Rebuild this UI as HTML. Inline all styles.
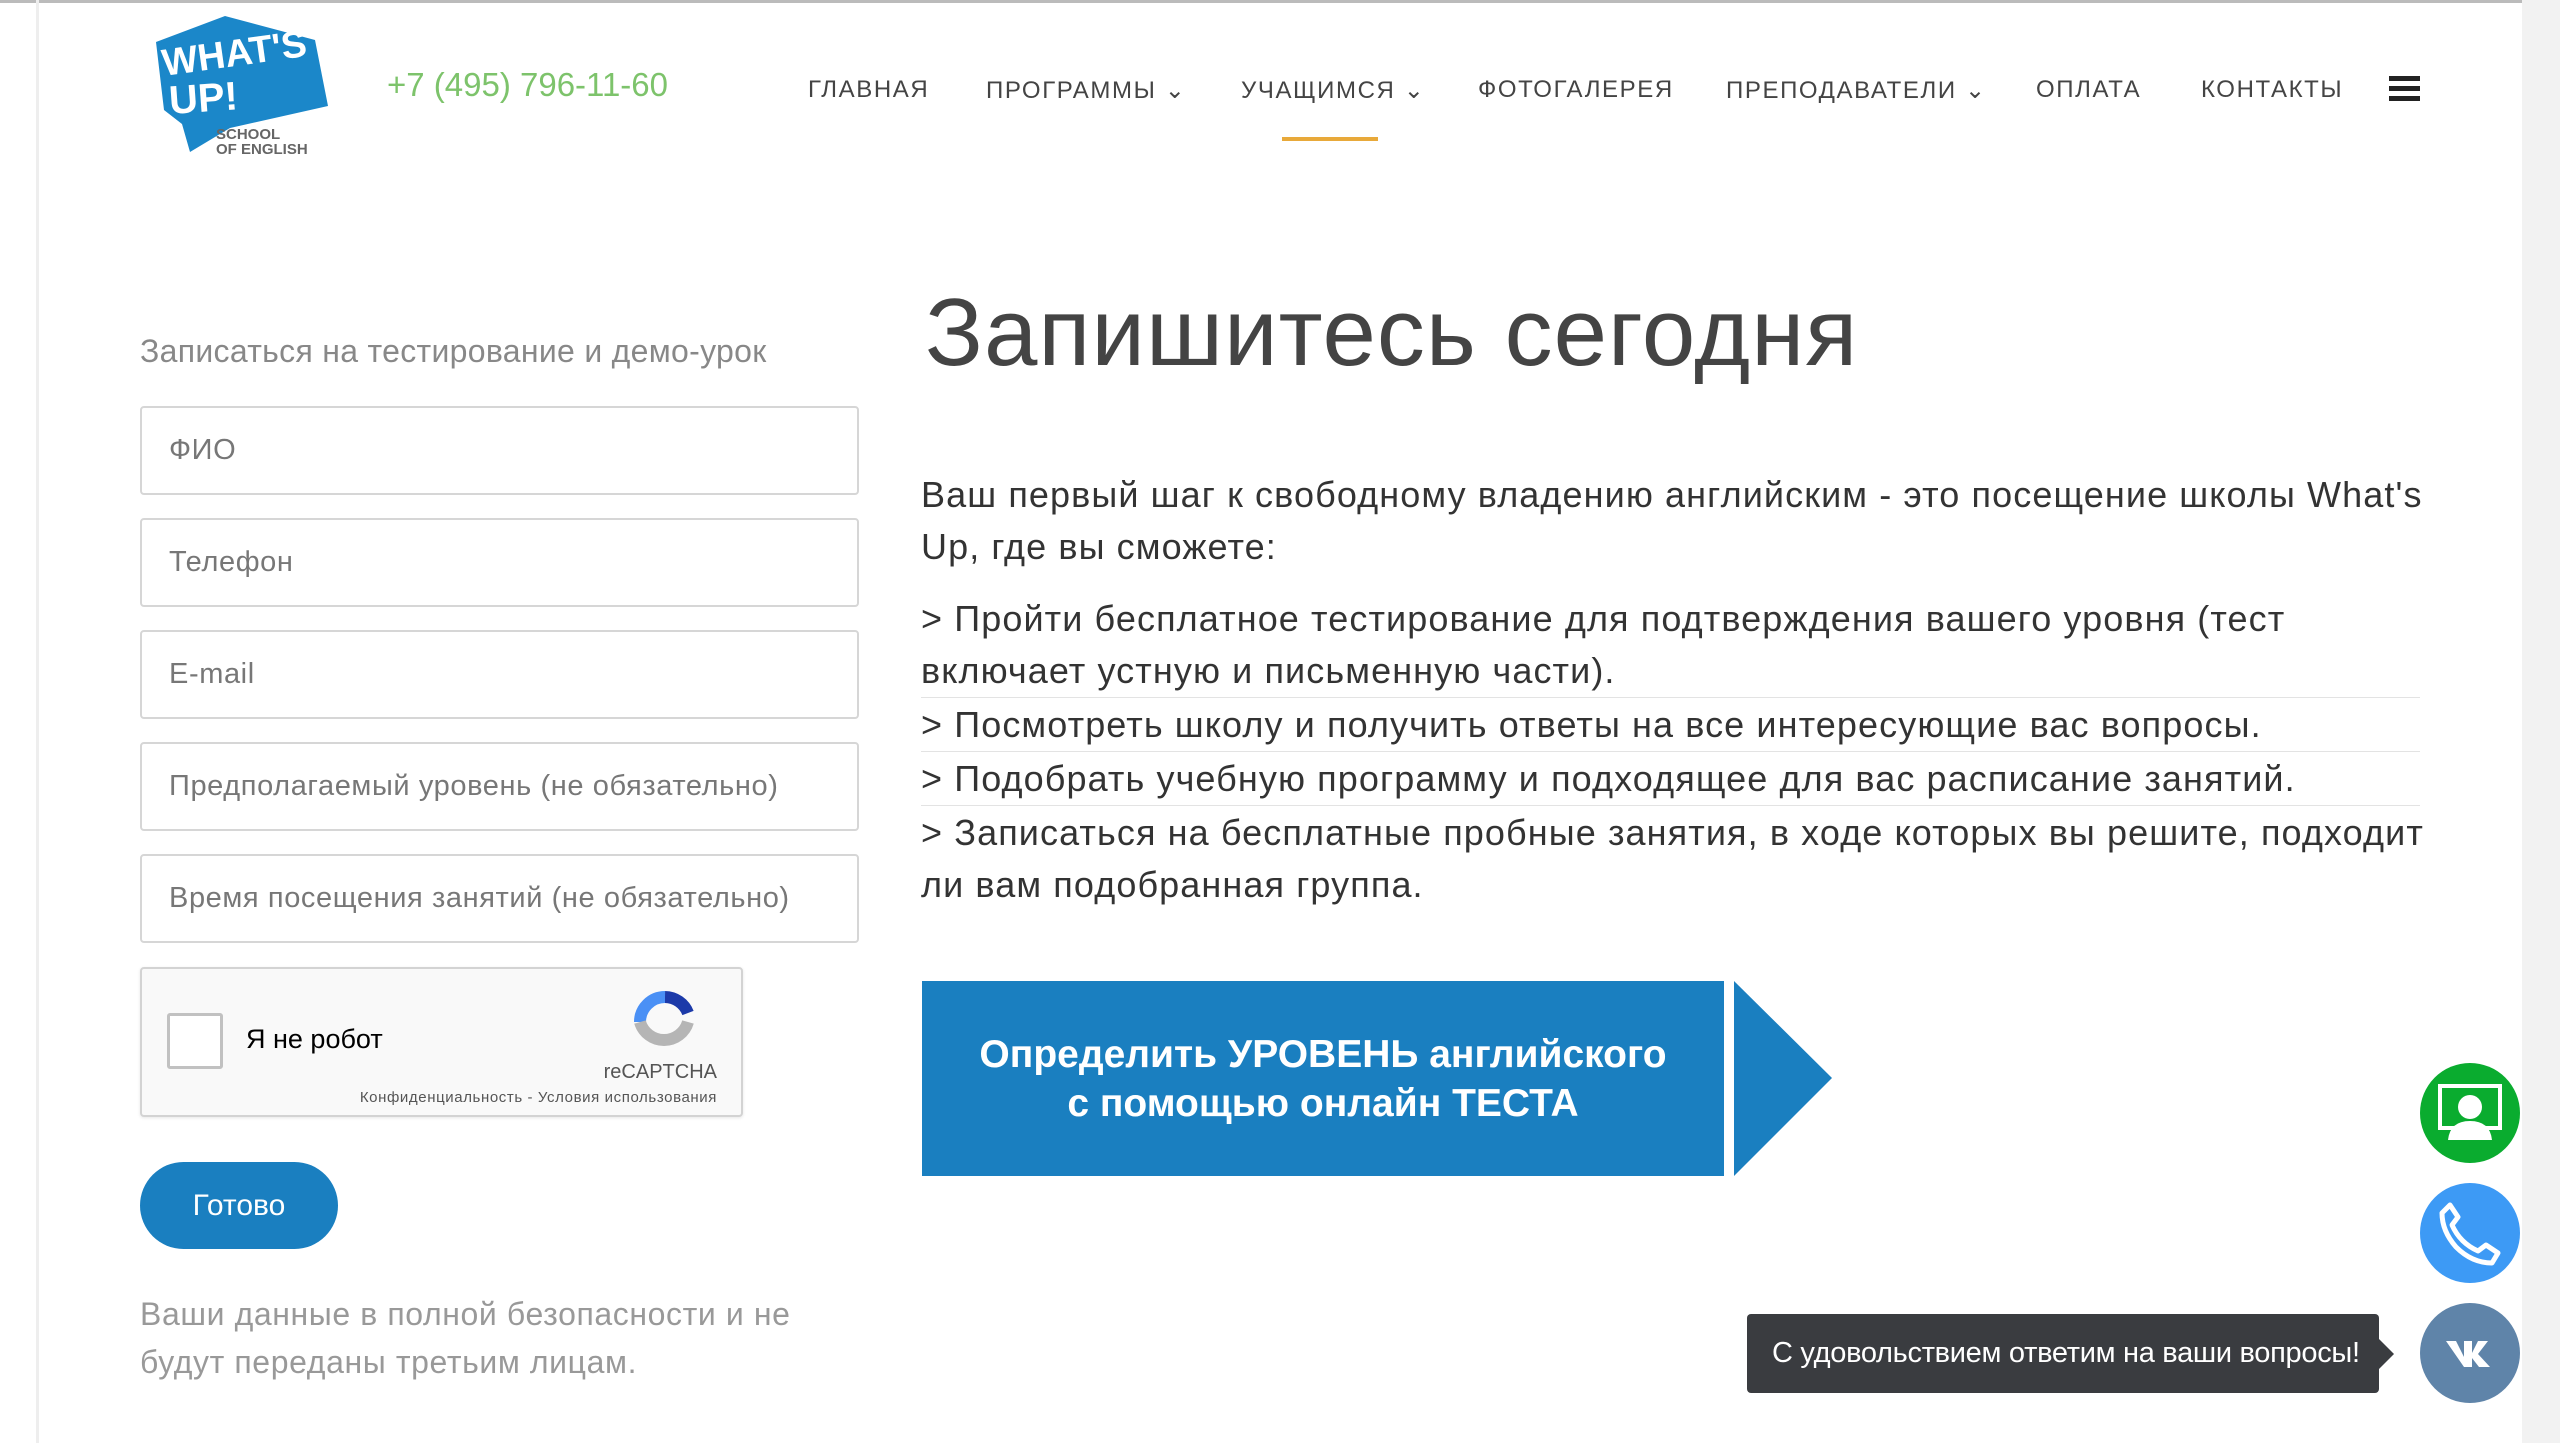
<!DOCTYPE html>
<html><head><meta charset="utf-8"><style>
*{margin:0;padding:0;box-sizing:border-box}
body{width:2560px;height:1443px;background:#fff;position:relative;overflow:hidden;font-family:"Liberation Sans","DejaVu Sans",sans-serif}
.a{position:absolute}
.nav{top:76px;font-size:24px;letter-spacing:1.6px;color:#444;white-space:nowrap}
.inp{left:140px;width:719px;height:89px;border:2px solid #d6d6d6;border-radius:4px;font-size:29px;color:#777;padding-left:27px;line-height:85px;letter-spacing:0.6px}
.li{left:921px;font-size:36px;color:#333;line-height:52px;width:1512px;letter-spacing:1.1px}
.sep{left:921px;width:1499px;height:1px;background:#e3e3e3}
</style></head><body>
<div class="a" style="left:0;top:0;width:2560px;height:3px;background:#bbb"></div>
<div class="a" style="left:36px;top:0;width:3px;height:1443px;background:#eee"></div>
<div class="a" style="left:2522px;top:0;width:38px;height:1443px;background:#f2f2f2"></div>
<svg class="a" style="left:150px;top:14px" width="180" height="145" viewBox="0 0 180 145">
<polygon points="6,28 75,2 165,26 178,92 80,114 40,138 32,110 14,96" fill="#1b87c9"/>
<text x="14" y="62" font-family="Liberation Sans" font-weight="bold" font-size="38" fill="#fff" transform="rotate(-8 14 62)">WHAT'S</text>
<text x="20" y="100" font-family="Liberation Sans" font-weight="bold" font-size="40" fill="#fff" transform="rotate(-4 20 100)">UP!</text>
<text x="66" y="125" font-family="Liberation Sans" font-weight="bold" font-size="15" fill="#666">SCHOOL</text>
<text x="66" y="140" font-family="Liberation Sans" font-weight="bold" font-size="15" fill="#666">OF ENGLISH</text>
</svg>
<div class="a" style="left:387px;top:66px;font-size:33px;color:#7dc36b">+7 (495) 796-11-60</div>
<div class="a nav" style="left:808px">ГЛАВНАЯ</div>
<div class="a nav" style="left:986px">ПРОГРАММЫ ⌄</div>
<div class="a nav" style="left:1241px">УЧАЩИМСЯ ⌄</div>
<div class="a nav" style="left:1478px">ФОТОГАЛЕРЕЯ</div>
<div class="a nav" style="left:1726px">ПРЕПОДАВАТЕЛИ ⌄</div>
<div class="a nav" style="left:2036px">ОПЛАТА</div>
<div class="a nav" style="left:2201px">КОНТАКТЫ</div>
<div class="a" style="left:1282px;top:137px;width:96px;height:4px;background:#e8a93a"></div>
<div class="a" style="left:2389px;top:76px;width:31px;height:5px;background:#222;box-shadow:0 10px 0 #222,0 20px 0 #222"></div>

<div class="a" style="left:140px;top:333px;font-size:32px;color:#888;letter-spacing:0.3px">Записаться на тестирование и демо-урок</div>
<div class="a inp" style="top:406px">ФИО</div>
<div class="a inp" style="top:518px">Телефон</div>
<div class="a inp" style="top:630px">E-mail</div>
<div class="a inp" style="top:742px">Предполагаемый уровень (не обязательно)</div>
<div class="a inp" style="top:854px">Время посещения занятий (не обязательно)</div>
<div class="a" style="left:140px;top:967px;width:603px;height:150px;background:#f9f9f9;border:2px solid #d3d3d3;border-radius:4px;box-shadow:0 1px 3px rgba(0,0,0,.1)">
<div class="a" style="left:25px;top:44px;width:56px;height:56px;background:#fff;border:3px solid #c1c1c1;border-radius:3px"></div>
<div class="a" style="left:104px;top:55px;font-size:27px;color:#000">Я не робот</div>
<svg class="a" style="left:490px;top:20px" width="66" height="66" viewBox="0 0 66 66"><path d="M33 8A25 25 0 0 1 56 24" stroke="#1c3aa9" stroke-width="12" fill="none"/><path d="M8 33A25 25 0 0 1 33 8" stroke="#4a90f5" stroke-width="12" fill="none"/><path d="M56 33A25 25 0 0 1 8 33" stroke="#b5b5b5" stroke-width="12" fill="none"/></svg>
<div class="a" style="right:24px;top:92px;font-size:20px;color:#555">reCAPTCHA</div>
<div class="a" style="right:24px;top:120px;font-size:15px;color:#555;white-space:nowrap;letter-spacing:0.6px">Конфиденциальность - Условия использования</div>
</div>
<div class="a" style="left:140px;top:1162px;width:198px;height:87px;border-radius:44px;background:#1a7fc0;color:#fff;font-size:30px;text-align:center;line-height:87px">Готово</div>
<div class="a" style="left:140px;top:1290px;font-size:32px;color:#999;line-height:48px;width:680px;letter-spacing:0.6px">Ваши данные в полной безопасности и не будут переданы третьим лицам.</div>

<div class="a" style="left:925px;top:278px;font-size:96px;color:#444;letter-spacing:1px">Запишитесь сегодня</div>
<div class="a li" style="top:469px">Ваш первый шаг к свободному владению английским - это посещение школы What's Up, где вы сможете:</div>
<div class="a li" style="top:593px">&gt; Пройти бесплатное тестирование для подтверждения вашего уровня (тест включает устную и письменную части).</div>
<div class="a sep" style="top:697px"></div>
<div class="a li" style="top:699px">&gt; Посмотреть школу и получить ответы на все интересующие вас вопросы.</div>
<div class="a sep" style="top:751px"></div>
<div class="a li" style="top:753px">&gt; Подобрать учебную программу и подходящее для вас расписание занятий.</div>
<div class="a sep" style="top:805px"></div>
<div class="a li" style="top:807px">&gt; Записаться на бесплатные пробные занятия, в ходе которых вы решите, подходит ли вам подобранная группа.</div>

<div class="a" style="left:922px;top:981px;width:802px;height:195px;background:#1a7fc0;color:#fff;font-weight:bold;font-size:39px;text-align:center;line-height:49px;display:flex;align-items:center;justify-content:center">Определить УРОВЕНЬ английского<br>с помощью онлайн ТЕСТА</div>
<svg class="a" style="left:1734px;top:981px" width="100" height="195"><polygon points="0,0 98,97 0,195" fill="#1a7fc0"/></svg>

<div class="a" style="left:1747px;top:1314px;width:632px;height:79px;background:#3a3c40;border-radius:4px;color:#fff;font-size:29px;line-height:79px;padding-left:25px;letter-spacing:-0.3px">С удовольствием ответим на ваши вопросы!</div>
<svg class="a" style="left:2378px;top:1338px" width="18" height="32"><polygon points="0,0 16,16 0,32" fill="#3a3c40"/></svg>
<svg class="a" style="left:2420px;top:1063px" width="100" height="100" viewBox="0 0 100 100"><circle cx="50" cy="50" r="50" fill="#0aac2f"/><rect x="20" y="23" width="60" height="42" fill="none" stroke="#fff" stroke-width="4"/><circle cx="50" cy="44" r="12" fill="#fff"/><path d="M28 77Q30 58 50 58Q70 58 72 77Z" fill="#fff"/></svg>
<svg class="a" style="left:2420px;top:1183px" width="100" height="100" viewBox="0 0 100 100"><circle cx="50" cy="50" r="50" fill="#3d9af5"/><path d="M30 22L38 34L32 42Q40 60 58 68L66 62L78 70L72 80Q52 80 36 64Q22 48 22 30Z" fill="none" stroke="#fff" stroke-width="5" stroke-linejoin="round"/></svg>
<svg class="a" style="left:2420px;top:1303px" width="100" height="100" viewBox="0 0 100 100"><circle cx="50" cy="50" r="50" fill="#5f84a9"/><path d="M26 38H36L44 54V38H52V50L58 38H68L58 51L70 64H59L52 55V64H44Z" fill="#fff"/></svg>
</body></html>
